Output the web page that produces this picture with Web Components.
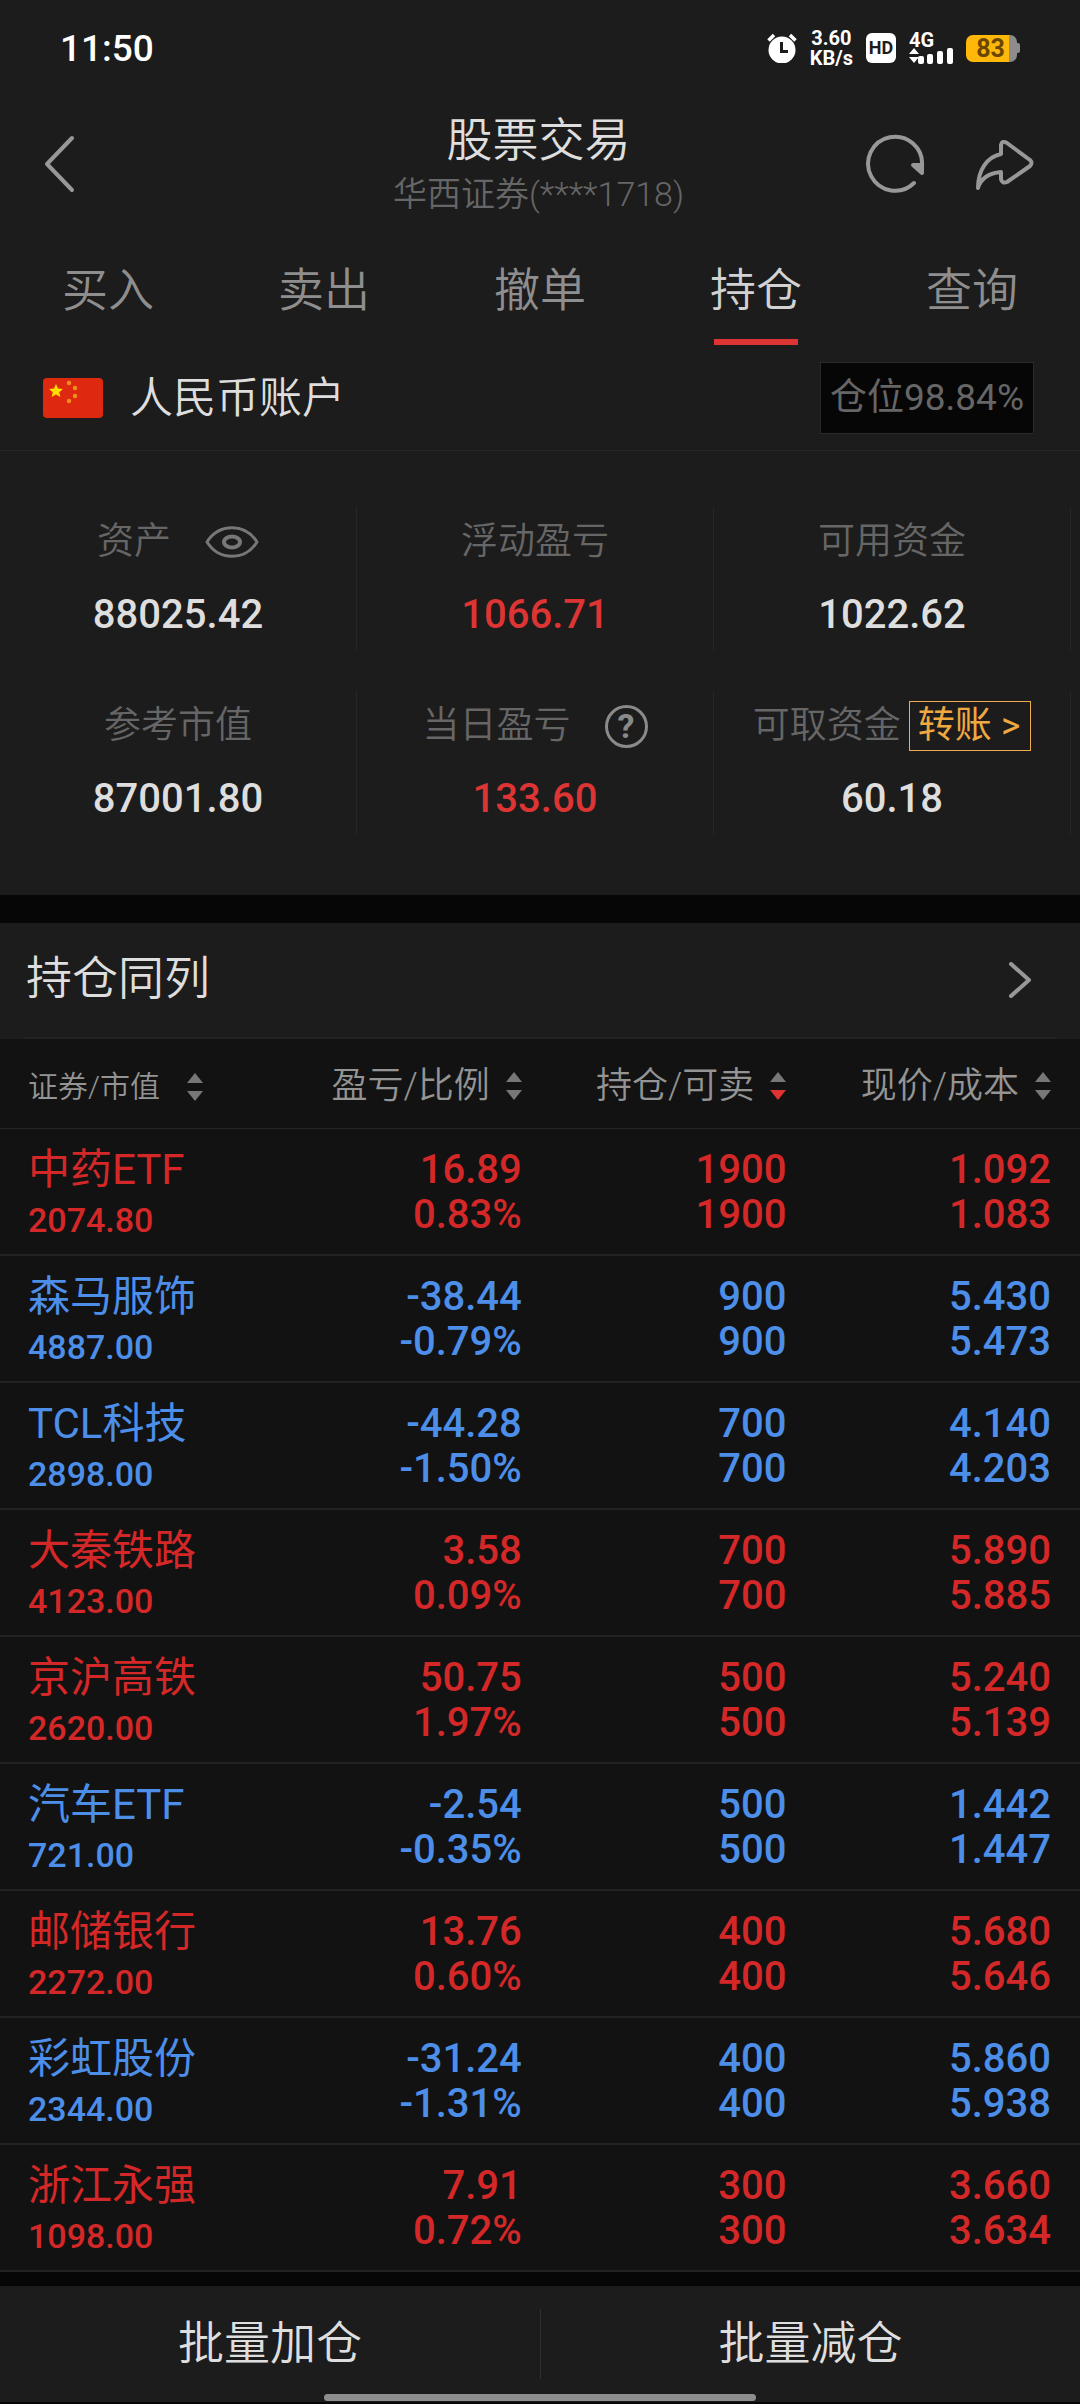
<!DOCTYPE html>
<html lang="zh-CN">
<head>
<meta charset="utf-8">
<meta name="viewport" content="width=device-width, initial-scale=1">
<title>股票交易</title>
<style>
  body {
    margin: 0;
    background: #060606;
    color: #dedede;
    font-family: Roboto, "Noto Sans CJK SC", sans-serif;
    font-weight: 350;
    --panel: #1c1c1c;
    --list: #121212;
    --line: #262626;
    --muted: #666;
    --icon: #989898;
    --up: #d42828;
    --down: #4c8ee8;
  }
</style>
</head>
<body>
<trade-page></trade-page>

<script>
const define = (name, html, setup) => {
  const template = document.createElement("template");
  template.innerHTML = `
    <style>
      :host { display: block; }
      button { font: inherit; color: inherit; background: none; border: 0; padding: 0; margin: 0; cursor: pointer; }
      svg { display: block; flex: none; }
    </style>
    ${html}
  `;
  customElements.define(name, class extends HTMLElement {
    constructor() {
      super();
      this.attachShadow({ mode: "open" }).append(template.content.cloneNode(true));
    }
    connectedCallback() {
      if (setup) setup(this, this.shadowRoot);
    }
  });
};

define("status-bar", `
  <style>
    :host { display: flex; align-items: center; height: 94px; padding: 2px 60px 0; box-sizing: border-box; color: #fff; font-weight: 700; }
    .time { flex: 1; font-size: 37px; font-weight: 500; }
    .icons { display: flex; align-items: center; gap: 13px; }
    .speed { display: grid; font-size: 20px; line-height: 20px; text-align: center; }
    .hd { background: #fff; color: #1c1c1c; border-radius: 6px; width: 30px; font-size: 18px; line-height: 30px; text-align: center; }
    .cell { display: grid; width: 44px; font-size: 20px; line-height: 16px; }
    .battery { display: flex; align-items: center; }
    .level { width: 51px; border-radius: 7px; background: linear-gradient(to right, #ffb80a 84%, #8c8c8c 84%); color: #6a4600; font-size: 25px; line-height: 27px; text-align: center; box-sizing: border-box; padding-right: 2px; }
    .tip { width: 3px; height: 10px; background: #8c8c8c; border-radius: 0 2px 2px 0; }
  </style>
  <span class="time">11:50</span>
  <div class="icons">
    <svg width="30" height="30" viewBox="0 0 30 30">
      <circle cx="15" cy="17" r="13.5" fill="#fff"/>
      <path d="M1.500 7.500L7 2M28.500 7.500L23 2" stroke="#fff" stroke-width="3.500"/>
      <path d="M14.500 9v9.500H21" fill="none" stroke="#1c1c1c" stroke-width="3"/>
    </svg>
    <div class="speed"><span>3.60</span><span>KB/s</span></div>
    <span class="hd">HD</span>
    <div class="cell">
      <span>4G</span>
      <svg width="44" height="16" viewBox="0 0 44 16" fill="#fff">
        <path d="M0 6l5-6 5 6zM0 9h10l-5 6z"/>
        <rect x="9" y="8" width="6" height="8" rx="2"/>
        <rect x="18" y="6" width="6" height="10" rx="2"/>
        <rect x="28" y="3" width="6" height="13" rx="2"/>
        <rect x="38" y="0" width="6" height="16" rx="2"/>
      </svg>
    </div>
    <div class="battery"><span class="level">83</span><span class="tip"></span></div>
  </div>
`);

define("nav-bar", `
  <style>
    :host { display: grid; grid-template-columns: 1fr auto 1fr; align-items: center; height: 140px; padding: 0 45px 0 42px; color: var(--icon); }
    button { display: block; }
    svg { fill: none; stroke: currentColor; stroke-width: 4; stroke-linecap: round; stroke-linejoin: round; }
    .title { display: grid; gap: 4px; text-align: center; }
    h1 { margin: 0; font-size: 46px; line-height: 56px; font-weight: inherit; color: #dedede; }
    .sub { font-size: 34px; line-height: 44px; color: var(--muted); }
    .actions { display: flex; justify-content: flex-end; gap: 48px; }
  </style>
  <div>
    <button aria-label="返回"><svg width="34" height="60" viewBox="0 0 34 60"><path d="M30 4L5 30l25 26"/></svg></button>
  </div>
  <div class="title">
    <h1><slot></slot></h1>
    <div class="sub"><slot name="sub"></slot></div>
  </div>
  <div class="actions">
    <button aria-label="刷新">
      <svg width="60" height="60" viewBox="0 0 60 60">
        <path d="M49 49A27 27 0 1 1 57 32"/>
        <path d="M48 31h9v8z" fill="currentColor"/>
      </svg>
    </button>
    <button aria-label="分享">
      <svg width="62" height="60" viewBox="0 0 62 60">
        <path d="M5 54C5 36 14 23 28 20V11Q29 6 34 9L57 26Q60 29 57 32L34 48Q29 50 28 45V38C17 39 8 44 5 54Z"/>
      </svg>
    </button>
  </div>
`);

define("tab-bar", `
  <style>
    :host { display: grid; grid-auto-flow: column; grid-auto-columns: 1fr; }
    button { display: grid; justify-items: center; gap: 21px; padding-top: 28px; font-size: 46px; line-height: 56px; color: #8e8e8e; }
    button::after { content: ""; width: 84px; height: 6px; }
    [aria-selected=true] { color: #d2d2d2; }
    [aria-selected=true]::after { background: #dd3434; }
  </style>
`, (host, root) => {
  host.setAttribute("role", "tablist");
  for (const name of host.getAttribute("tabs").split(" ")) {
    const button = document.createElement("button");
    button.textContent = name;
    button.setAttribute("role", "tab");
    button.setAttribute("aria-selected", name === host.getAttribute("current"));
    root.append(button);
  }
});

define("account-row", `
  <style>
    :host { display: flex; align-items: center; gap: 27px; height: 105px; padding: 0 46px 0 43px; border-bottom: 1px solid var(--line); font-size: 43px; line-height: 50px; }
    .name { flex: 1; }
    .ratio { padding: 0 9px; border: 1px solid #2a2a2a; background: #060606; color: var(--muted); font-size: 37px; line-height: 70px; font-weight: 400; }
  </style>
  <svg width="60" height="40" viewBox="0 0 60 40">
    <rect width="60" height="40" rx="4" fill="#de2910"/>
    <path fill="#ffde00" d="M13 6l2 4.600 5 .4-3.800 3.200 1.200 4.800-4.400-2.600L8.600 19l1.200-4.800L6 11l5-.4z"/>
    <g fill="#f0901c"><circle cx="26" cy="5" r="2.200"/><circle cx="32" cy="10" r="2.200"/><circle cx="32" cy="18" r="2.200"/><circle cx="26" cy="23" r="2.200"/></g>
  </svg>
  <span class="name"><slot></slot></span>
  <span class="ratio"><slot name="ratio"></slot></span>
`);

define("fund-grid", `
  <style>
    :host { display: grid; grid-template-columns: repeat(3, 1fr); row-gap: 40px; padding: 56px 9px 60px 0; }
  </style>
  <slot></slot>
`);

define("fund-cell", `
  <style>
    :host { height: 144px; box-sizing: border-box; padding-top: 10px; border-right: 1px solid var(--line); text-align: center; white-space: nowrap; }
    .label { display: flex; justify-content: center; align-items: center; gap: 8px; height: 50px; font-size: 37px; line-height: 50px; color: var(--muted); }
    .value { margin-top: 24px; font-size: 40px; line-height: 48px; font-weight: 500; }
    :host([up]) .value { color: #dd3434; }
  </style>
  <div class="label"><slot name="label"></slot><slot name="extra"></slot></div>
  <div class="value"><slot></slot></div>
`);

define("eye-button", `
  <style>
    :host { margin-left: 26px; color: #777; }
    button { display: block; }
  </style>
  <button aria-label="隐藏金额">
    <svg width="54" height="32" viewBox="0 0 54 32" fill="none" stroke="currentColor" stroke-width="3">
      <path d="M2 16C14 -3 40 -3 52 16C40 35 14 35 2 16Z" stroke-linejoin="round"/>
      <ellipse cx="27" cy="16" rx="8" ry="5.500" stroke-width="4"/>
    </svg>
  </button>
`);

define("help-button", `
  <style>
    :host { margin-left: 26px; }
    button { display: block; width: 43px; height: 43px; box-sizing: border-box; border: 3px solid #8a8a8a; border-radius: 50%; color: #8a8a8a; font-size: 34px; line-height: 37px; font-weight: 700; }
  </style>
  <button aria-label="当日盈亏说明">?</button>
`);

define("transfer-button", `
  <style>
    button { display: block; padding: 0 10px 0 8px; border: 1px solid #f0ac50; color: #f0a840; font-size: 37px; line-height: 48px; font-weight: 400; }
  </style>
  <button><slot></slot></button>
`);

define("section-link", `
  <style>
    a { display: flex; align-items: center; justify-content: space-between; height: 114px; margin: 0 24px; padding: 0 24px 0 2px; border-bottom: 2px solid #232323; color: inherit; text-decoration: none; font-size: 46px; line-height: 56px; }
    span { padding-bottom: 4px; }
  </style>
  <a href="#holdings"><span><slot></slot></span>
    <svg width="24" height="36" viewBox="0 0 24 36" fill="none" stroke="#989898" stroke-width="4" stroke-linecap="round" stroke-linejoin="round"><path d="M3 2l18 16L3 34"/></svg>
  </a>
`);

const holdings = [
  ["中药ETF", "2074.80", "16.89", "0.83%", "1900", "1900", "1.092", "1.083"],
  ["森马服饰", "4887.00", "-38.44", "-0.79%", "900", "900", "5.430", "5.473"],
  ["TCL科技", "2898.00", "-44.28", "-1.50%", "700", "700", "4.140", "4.203"],
  ["大秦铁路", "4123.00", "3.58", "0.09%", "700", "700", "5.890", "5.885"],
  ["京沪高铁", "2620.00", "50.75", "1.97%", "500", "500", "5.240", "5.139"],
  ["汽车ETF", "721.00", "-2.54", "-0.35%", "500", "500", "1.442", "1.447"],
  ["邮储银行", "2272.00", "13.76", "0.60%", "400", "400", "5.680", "5.646"],
  ["彩虹股份", "2344.00", "-31.24", "-1.31%", "400", "400", "5.860", "5.938"],
  ["浙江永强", "1098.00", "7.91", "0.72%", "300", "300", "3.660", "3.634"],
];

define("sort-button", `
  <style>
    button { display: inline-flex; align-items: center; gap: 16px; font-size: 36px; line-height: 48px; }
    :host([small]) button { font-size: 30px; gap: 27px; }
    svg { fill: #777; }
    :host([desc]) .down { fill: #e03232; }
  </style>
  <button>
    <slot></slot>
    <svg width="16" height="30" viewBox="0 0 16 30"><path d="M0 11L8 1l8 10z"/><path class="down" d="M0 19h16l-8 10z"/></svg>
  </button>
`);

define("holdings-table", `
  <style>
    :host { background: var(--list); }
    table { width: 100%; table-layout: fixed; border-collapse: separate; border-spacing: 0; }
    th, td { box-sizing: border-box; padding: 0 29px 0 0; text-align: right; font-size: 40px; line-height: 45px; font-weight: 500; }
    th { width: 24.500%; height: 90px; padding-top: 4px; border-bottom: 1px solid var(--line); color: #949494; font-weight: 350; vertical-align: middle; }
    th:first-child { width: 26.500%; }
    td { height: 127px; padding-top: 18px; border-bottom: 2px solid #222; vertical-align: top; }
    th:first-child, td:first-child { padding-left: 28px; padding-right: 0; text-align: left; }
    .up { color: var(--up); }
    .down { color: var(--down); }
    .name { margin-bottom: 6px; font-size: 42px; font-weight: 400; }
    .worth { font-size: 34px; }
  </style>
  <table>
    <thead>
      <tr>
        <th><sort-button small>证券/市值</sort-button></th>
        <th><sort-button>盈亏/比例</sort-button></th>
        <th><sort-button desc>持仓/可卖</sort-button></th>
        <th><sort-button>现价/成本</sort-button></th>
      </tr>
    </thead>
    <tbody></tbody>
  </table>
`, (host, root) => {
  root.querySelector("tbody").innerHTML = holdings.map(([name, worth, ...n]) => `
    <tr class="${n[0].startsWith("-") ? "down" : "up"}">
      <td><div class="name">${name}</div><div class="worth">${worth}</div></td>
      <td>${n[0]}<br>${n[1]}</td>
      <td>${n[2]}<br>${n[3]}</td>
      <td>${n[4]}<br>${n[5]}</td>
    </tr>
  `).join("");
});

define("batch-bar", `
  <style>
    :host { display: grid; grid-template-columns: 1fr 1fr; align-items: center; height: 116px; position: relative; background: var(--panel); }
    button { height: 70px; padding-bottom: 2px; font-size: 46px; line-height: 56px; }
    button + button { border-left: 1px solid #303030; }
    .home { position: absolute; left: 30%; right: 30%; bottom: 1px; height: 7px; border-radius: 4px; background: #8e8e8e; }
  </style>
  <button>批量加仓</button>
  <button>批量减仓</button>
  <div class="home"></div>
`);

define("trade-page", `
  <style>
    .panel { background: var(--panel); }
    .panel + .panel { margin-top: 28px; }
    batch-bar { margin-top: 14px; margin-bottom: 2px; }
  </style>
  <div class="panel">
    <status-bar></status-bar>
    <nav-bar>股票交易<span slot="sub">华西证券(****1718)</span></nav-bar>
    <tab-bar tabs="买入 卖出 撤单 持仓 查询" current="持仓"></tab-bar>
    <account-row>人民币账户<span slot="ratio">仓位98.84%</span></account-row>
    <fund-grid>
      <fund-cell><span slot="label">资产</span><eye-button slot="extra"></eye-button>88025.42</fund-cell>
      <fund-cell up><span slot="label">浮动盈亏</span>1066.71</fund-cell>
      <fund-cell><span slot="label">可用资金</span>1022.62</fund-cell>
      <fund-cell><span slot="label">参考市值</span>87001.80</fund-cell>
      <fund-cell up><span slot="label">当日盈亏</span><help-button slot="extra"></help-button>133.60</fund-cell>
      <fund-cell><span slot="label">可取资金</span><transfer-button slot="extra">转账 &gt;</transfer-button>60.18</fund-cell>
    </fund-grid>
  </div>
  <div class="panel"><section-link>持仓同列</section-link></div>
  <holdings-table id="holdings"></holdings-table>
  <batch-bar></batch-bar>
`);
</script>
</body>
</html>
